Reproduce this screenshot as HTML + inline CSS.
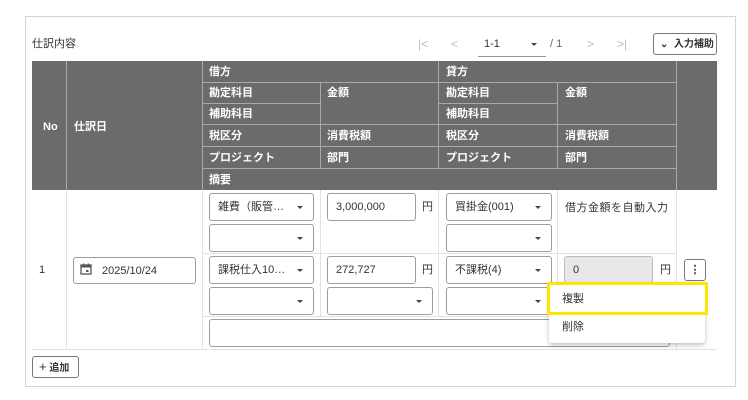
<!DOCTYPE html>
<html><head><meta charset="utf-8"><style>
*{box-sizing:border-box;margin:0;padding:0}
body{width:748px;height:400px;background:#fff;font-family:"Liberation Sans","Noto Sans CJK JP",sans-serif;color:#333;position:relative;overflow:hidden;font-size:11px}
.a{position:absolute}
.card{left:25px;top:16px;width:711px;height:371px;border:1px solid #d4d4d4}
.h{background:#6b6b6b}
.hl{background:#a9a9a9}
.ht{position:absolute;color:#fff;font-weight:bold;font-size:11px;line-height:12px}
.vl{background:#e2e2e2}
.box{position:absolute;border:1px solid #9e9e9e;border-radius:3px;background:#fff;font-size:11px;line-height:14px;padding:6px 0 0 8px;color:#333}
.dd::after{content:"";position:absolute;right:10px;top:12px;border-left:3px solid transparent;border-right:3px solid transparent;border-top:3px solid #444}
.t{position:absolute;font-size:11px;color:#333;line-height:14px}
</style></head><body>
<div class="a card"></div>
<div class="t" style="left:32px;top:37px;font-size:11px">仕訳内容</div>
<!-- pagination -->
<div class="t" style="left:418px;top:37px;color:#bbb;font-size:12px">|&lt;</div>
<div class="t" style="left:451px;top:37px;color:#bbb;font-size:12px">&lt;</div>
<div class="t" style="left:484px;top:37px">1-1</div>
<div class="a" style="left:531px;top:43px;border-left:3px solid transparent;border-right:3px solid transparent;border-top:3px solid #444"></div>
<div class="a" style="left:478px;top:56px;width:68px;height:1px;background:#999"></div>
<div class="t" style="left:550px;top:37px;color:#666">/ 1</div>
<div class="t" style="left:587px;top:37px;color:#bbb;font-size:12px">&gt;</div>
<div class="t" style="left:617px;top:37px;color:#bbb;font-size:12px">&gt;|</div>
<div class="box" style="left:653px;top:33px;width:64px;height:22px;padding:4px 0 0 6px;font-weight:bold;font-size:10px;border-color:#777">⌄&nbsp; 入力補助</div>
<!-- header -->
<div class="a h" style="left:32px;top:61px;width:685px;height:129px"></div>
<div class="a hl" style="left:66px;top:61px;width:1px;height:129px"></div>
<div class="a hl" style="left:202px;top:61px;width:1px;height:129px"></div>
<div class="a hl" style="left:438px;top:61px;width:1px;height:107px"></div>
<div class="a hl" style="left:676px;top:61px;width:1px;height:129px"></div>
<div class="a hl" style="left:320px;top:82px;width:1px;height:86px"></div>
<div class="a hl" style="left:557px;top:82px;width:1px;height:86px"></div>
<div class="a hl" style="left:202px;top:82px;width:474px;height:1px"></div>
<div class="a hl" style="left:202px;top:103px;width:118px;height:1px"></div>
<div class="a hl" style="left:438px;top:103px;width:119px;height:1px"></div>
<div class="a hl" style="left:202px;top:124px;width:474px;height:1px"></div>
<div class="a hl" style="left:202px;top:146px;width:474px;height:1px"></div>
<div class="a hl" style="left:202px;top:168px;width:474px;height:1px"></div>
<div class="ht" style="left:43px;top:121px">No</div>
<div class="ht" style="left:74px;top:121px">仕訳日</div>
<div class="ht" style="left:209px;top:66px">借方</div>
<div class="ht" style="left:446px;top:66px">貸方</div>
<div class="ht" style="left:209px;top:87px">勘定科目</div>
<div class="ht" style="left:327px;top:87px">金額</div>
<div class="ht" style="left:446px;top:87px">勘定科目</div>
<div class="ht" style="left:565px;top:87px">金額</div>
<div class="ht" style="left:209px;top:108px">補助科目</div>
<div class="ht" style="left:446px;top:108px">補助科目</div>
<div class="ht" style="left:209px;top:130px">税区分</div>
<div class="ht" style="left:327px;top:130px">消費税額</div>
<div class="ht" style="left:446px;top:130px">税区分</div>
<div class="ht" style="left:565px;top:130px">消費税額</div>
<div class="ht" style="left:209px;top:152px">プロジェクト</div>
<div class="ht" style="left:327px;top:152px">部門</div>
<div class="ht" style="left:446px;top:152px">プロジェクト</div>
<div class="ht" style="left:565px;top:152px">部門</div>
<div class="ht" style="left:209px;top:174px">摘要</div>
<!-- body lines -->
<div class="a vl" style="left:66px;top:190px;width:1px;height:159px"></div>
<div class="a vl" style="left:202px;top:190px;width:1px;height:159px"></div>
<div class="a vl" style="left:320px;top:190px;width:1px;height:126px"></div>
<div class="a vl" style="left:438px;top:190px;width:1px;height:126px"></div>
<div class="a vl" style="left:557px;top:190px;width:1px;height:126px"></div>
<div class="a vl" style="left:676px;top:190px;width:1px;height:159px"></div>
<div class="a vl" style="left:202px;top:253px;width:474px;height:1px"></div>
<div class="a vl" style="left:202px;top:316px;width:474px;height:1px"></div>
<div class="a vl" style="left:32px;top:349px;width:685px;height:1px"></div>
<div class="t" style="left:39px;top:263px">1</div>
<div class="box" style="left:73px;top:257px;width:123px;height:27px;padding-left:28px">2025/10/24</div>
<svg class="a" style="left:80px;top:263px" width="12" height="12" viewBox="0 0 12 12"><rect x="1" y="2" width="10" height="9" fill="none" stroke="#555" stroke-width="1.3"/><rect x="1" y="2" width="10" height="2.5" fill="#555"/><rect x="3" y="0.5" width="1.3" height="2" fill="#555"/><rect x="7.7" y="0.5" width="1.3" height="2" fill="#555"/><rect x="6" y="7" width="2.5" height="2" fill="#555"/></svg>
<div class="box dd" style="left:209px;top:193px;width:105px;height:28px">雑費（販管…</div>
<div class="box" style="left:327px;top:193px;width:89px;height:28px">3,000,000</div>
<div class="t" style="left:422px;top:200px">円</div>
<div class="box dd" style="left:446px;top:193px;width:106px;height:28px">買掛金(001)</div>
<div class="t" style="left:565px;top:201px;letter-spacing:0.5px">借方金額を自動入力</div>
<div class="box dd" style="left:209px;top:224px;width:105px;height:28px"></div>
<div class="box dd" style="left:446px;top:224px;width:106px;height:28px"></div>
<div class="box dd" style="left:209px;top:256px;width:105px;height:28px">課税仕入10…</div>
<div class="box" style="left:327px;top:256px;width:89px;height:28px">272,727</div>
<div class="t" style="left:422px;top:263px">円</div>
<div class="box dd" style="left:446px;top:256px;width:106px;height:28px">不課税(4)</div>
<div class="box" style="left:564px;top:256px;width:89px;height:28px;background:#e8e8e8;border-color:#bbb">0</div>
<div class="t" style="left:660px;top:263px">円</div>
<div class="box" style="left:684px;top:259px;width:22px;height:22px;border-color:#777;padding:0;text-align:center;font-weight:bold;line-height:20px">⋮</div>
<div class="box dd" style="left:209px;top:287px;width:105px;height:28px"></div>
<div class="box dd" style="left:327px;top:287px;width:106px;height:28px"></div>
<div class="box dd" style="left:446px;top:287px;width:106px;height:28px"></div>
<div class="box" style="left:209px;top:319px;width:461px;height:28px"></div>
<!-- menu -->
<div class="a" style="left:549px;top:282px;width:156px;height:61px;background:#fff;box-shadow:0 2px 5px rgba(0,0,0,.25);border-radius:3px"></div>
<div class="a" style="left:547px;top:282px;width:161px;height:33px;border:3px solid #ffe600"></div>
<div class="t" style="left:562px;top:292px">複製</div>
<div class="t" style="left:562px;top:320px">削除</div>
<div class="box" style="left:32px;top:356px;width:47px;height:22px;border-color:#777;padding:3px 0 0 6px;font-weight:bold;font-size:10px"><span style="font-size:13px;font-weight:normal">+</span> 追加</div>
</body></html>
